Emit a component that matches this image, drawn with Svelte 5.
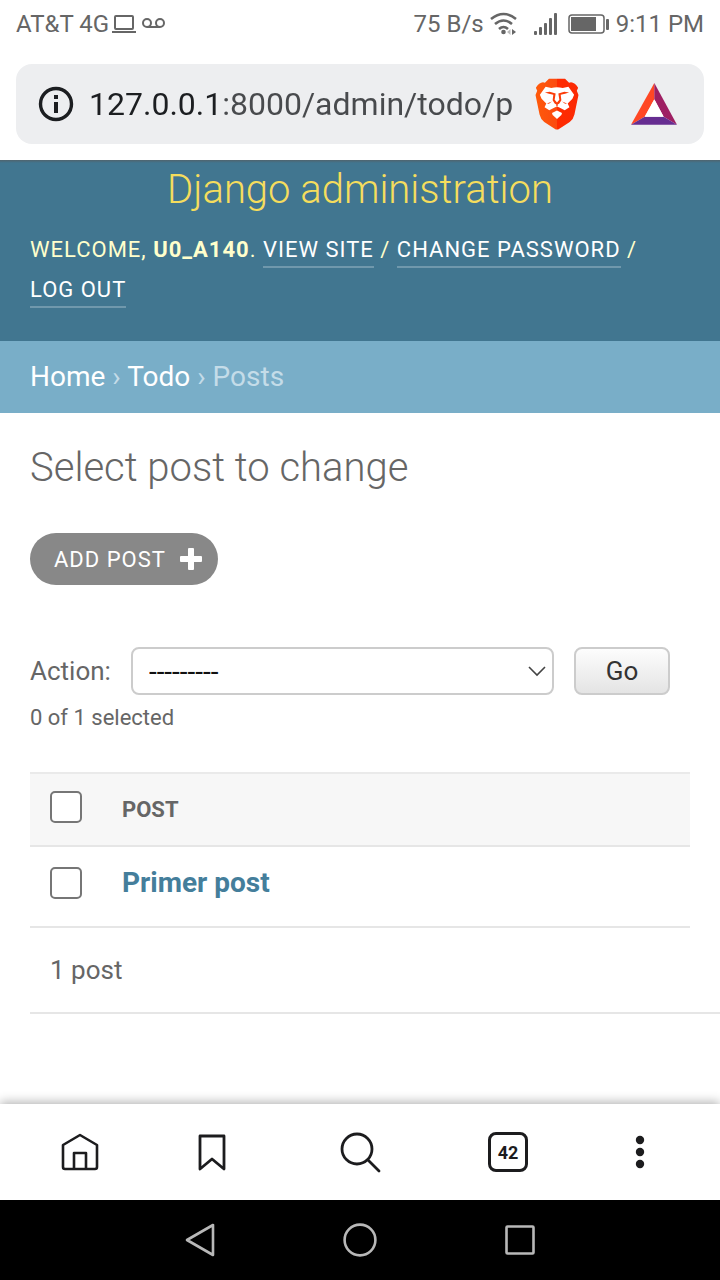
<script>
  let address = '127.0.0.1:8000/admin/todo/p';
  let action = '';
  let openTabs = 42;

  let posts = [{ id: 1, title: 'Primer post', selected: false }];

  $: selectedCount = posts.filter((post) => post.selected).length;
  $: allSelected = selectedCount === posts.length;

  function toggleAll(event) {
    const checked = event.target.checked;
    posts = posts.map((post) => ({ ...post, selected: checked }));
  }
</script>

<div class="screen">
  <div class="status-bar">
    <div class="status-group">
      <span>AT&amp;T 4G</span>
      <svg class="laptop" width="24" height="20" viewBox="0 0 24 20" fill="none" stroke="#666" stroke-width="2">
        <rect x="3" y="2" width="18" height="13" rx="1" />
        <path d="M0 18h24" />
      </svg>
      <svg class="voicemail" width="24" height="12" viewBox="0 0 24 12" fill="none" stroke="#666" stroke-width="2">
        <circle cx="5" cy="5" r="4" />
        <circle cx="18" cy="5" r="4" />
        <path d="M5 9h13" />
      </svg>
    </div>
    <div class="status-group">
      <span>75 B/s</span>
      <svg class="wifi" width="28" height="24" viewBox="0 0 28 24" fill="none" stroke="#666" stroke-width="2.6">
        <path d="M1 7Q13.500 -3 26 7" />
        <path d="M5 12Q13.500 5 22 12" />
        <path d="M9 17Q13.500 13 18 17" />
        <circle cx="13.500" cy="20" r="2.300" fill="#666" stroke="none" />
        <path d="M22 17l4 3-4 3z" fill="#666" stroke="none" />
        <path d="M20.500 17l-3.500 3 3.500 3z" fill="#bbb" stroke="none" />
      </svg>
      <svg class="signal" width="24" height="22" viewBox="0 0 24 22" fill="#666">
        <rect x="0" y="18" width="3" height="4" rx="1" />
        <rect x="5" y="14" width="3" height="8" rx="1" />
        <rect x="10" y="10" width="3" height="12" rx="1" />
        <rect x="15" y="5" width="3" height="17" rx="1" />
        <rect x="20" y="0" width="3" height="22" rx="1" />
      </svg>
      <svg class="battery" width="42" height="20" viewBox="0 0 42 20">
        <rect x="1" y="1" width="35" height="18" rx="3" fill="none" stroke="#666" stroke-width="1.500" />
        <rect x="3" y="3" width="25" height="14" fill="#666" />
        <rect x="38" y="5" width="3" height="11" rx="1" fill="#666" />
      </svg>
      <span>9:11 PM</span>
    </div>
  </div>

  <div class="address-bar">
    <svg class="info" width="36" height="36" viewBox="0 0 36 36">
      <circle cx="18" cy="18" r="15.500" fill="none" stroke="#1c1e21" stroke-width="3.400" />
      <rect x="16" y="9" width="4" height="4" fill="#1c1e21" />
      <rect x="16" y="16" width="4" height="11" fill="#1c1e21" />
    </svg>
    <input class="address" type="text" aria-label="Address" bind:value={address} spellcheck="false" />
    <button class="logo-button" aria-label="Brave Shields">
      <svg width="44" height="52" viewBox="49 41 130 155">
        <defs>
          <linearGradient id="lion" x1="0" x2="1">
            <stop offset="0" stop-color="#ff5a0a" />
            <stop offset="0.500" stop-color="#fb4a10" />
            <stop offset="0.510" stop-color="#ff2b00" />
            <stop offset="1" stop-color="#fb2a05" />
          </linearGradient>
        </defs>
        <path fill="url(#lion)" d="M90 43H138L150 55C158 50 170 57 177 70L173 79L178 92L166 150Q163 164 152 172L121 192Q114 197 107 192L76 172Q65 164 62 150L50 92L55 79L51 70C58 57 70 50 78 55Z" />
        <path fill="#fff" d="M80 67L97 71Q114 66 131 71L148 67L165 91L160 103L146 117L151 128L137 137L121 129Q114 125 107 129L91 137L77 128L82 117L68 103L63 91Z" />
        <path fill="#fff" d="M99 145L114 138L129 145L127 151L114 163L101 151Z" />
        <path fill="#fb3c08" d="M78 84L92 82L110 87L107 106L114 114L121 106L118 87L136 82L150 84L138 88L125 91L127 107L121 117L116 120V126H112V120L107 117L101 107L103 91L90 88Z" />
        <path fill="#fb3c08" d="M84 117L99 111L90 118ZM144 117L129 111L138 118Z" />
      </svg>
    </button>
    <button class="logo-button rewards" aria-label="Brave Rewards">
      <svg width="46" height="42" viewBox="333 55 138 126">
        <path fill="#ff4724" d="M403 55V104L374 156L333 180Z" />
        <path fill="#9e1f63" d="M403 55L471 180L431 156L403 104Z" />
        <path fill="#662d91" d="M333 180L374 156H431L471 180Z" />
        <path fill="#fff" d="M403 104L431 156H374Z" />
      </svg>
    </button>
  </div>

  <header class="site-header">
    <h1>Django administration</h1>
    <div class="user-tools">
      <span>Welcome,</span>
      <span><strong>u0_a140</strong>.</span>
      <a href="#site">View site</a>
      <span>/</span>
      <a href="#password">Change password</a>
      <span>/</span>
      <a href="#logout">Log out</a>
    </div>
  </header>

  <nav class="breadcrumbs" aria-label="Breadcrumbs">
    <a href="#home">Home</a>
    <span>›</span>
    <a href="#todo">Todo</a>
    <span>›</span>
    <span>Posts</span>
  </nav>

  <main>
    <h2>Select post to change</h2>

    <a class="add-link" href="#add">
      <span>Add post</span>
      <svg width="22" height="22" viewBox="0 0 22 22" fill="#fff">
        <rect x="8" y="0" width="6" height="22" rx="1" />
        <rect x="0" y="8" width="22" height="6" rx="1" />
      </svg>
    </a>

    <div class="actions">
      <label for="action">Action:</label>
      <div class="select-wrapper">
        <select id="action" bind:value={action}>
          <option value="">---------</option>
          <option value="delete">Delete selected posts</option>
        </select>
        <svg width="18" height="11" viewBox="0 0 18 11" fill="none" stroke="#444" stroke-width="1.600">
          <path d="M1 1l8 8 8-8" />
        </svg>
      </div>
      <button class="go" type="button">Go</button>
    </div>
    <p class="counter">{selectedCount} of {posts.length} selected</p>

    <table>
      <thead>
        <tr>
          <th class="check">
            <input type="checkbox" aria-label="Select all posts" checked={allSelected} on:change={toggleAll} />
          </th>
          <th>Post</th>
        </tr>
      </thead>
      <tbody>
        {#each posts as post (post.id)}
          <tr>
            <td class="check">
              <input type="checkbox" aria-label="Select {post.title}" bind:checked={post.selected} />
            </td>
            <td><a href="#post-{post.id}">{post.title}</a></td>
          </tr>
        {/each}
      </tbody>
    </table>

    <p class="paginator">{posts.length} post</p>
  </main>

  <nav class="toolbar" aria-label="Browser">
    <button aria-label="Home">
      <svg width="40" height="40" viewBox="0 0 40 40" fill="none" stroke="#1c1c1e" stroke-width="2.600" stroke-linejoin="round">
        <path d="M20 3L37 13V35Q37 37 35 37H5Q3 37 3 35V13Z" />
        <path d="M14 37V21H26V37" />
      </svg>
    </button>
    <button aria-label="Bookmarks">
      <svg width="40" height="40" viewBox="0 0 40 40" fill="none" stroke="#1c1c1e" stroke-width="2.800" stroke-linejoin="round">
        <path d="M8 4H32V37L20 27L8 37Z" />
      </svg>
    </button>
    <button class="search" aria-label="Search">
      <svg width="42" height="42" viewBox="0 0 42 42" fill="none" stroke="#1c1c1e" stroke-width="2.800" stroke-linecap="round">
        <circle cx="18" cy="18" r="15" />
        <path d="M29 29L40 40" />
      </svg>
    </button>
    <button class="tabs" aria-label="Open tabs">{openTabs}</button>
    <button aria-label="Menu">
      <svg width="40" height="40" viewBox="0 0 40 40" fill="#1c1c1e">
        <circle cx="20" cy="8" r="4.200" />
        <circle cx="20" cy="20" r="4.200" />
        <circle cx="20" cy="32" r="4.200" />
      </svg>
    </button>
  </nav>

  <nav class="system-nav" aria-label="System">
    <button aria-label="Back">
      <svg width="36" height="36" viewBox="0 0 36 36" fill="none" stroke="#b8b8b8" stroke-width="2.600" stroke-linejoin="round">
        <path d="M31 3V33L5 18Z" />
      </svg>
    </button>
    <button aria-label="Home screen">
      <svg width="36" height="36" viewBox="0 0 36 36" fill="none" stroke="#b8b8b8" stroke-width="2.600">
        <circle cx="18" cy="18" r="15.400" />
      </svg>
    </button>
    <button aria-label="Recent apps">
      <svg width="36" height="36" viewBox="0 0 36 36" fill="none" stroke="#b8b8b8" stroke-width="2.600">
        <rect x="4.500" y="4.500" width="27" height="27" rx="1" />
      </svg>
    </button>
  </nav>
</div>

<style>
  :global(body) {
    margin: 0;
    background: #fff;
  }

  .screen {
    display: flex;
    flex-direction: column;
    min-height: 100vh;
    font-family: Roboto, "Liberation Sans", sans-serif;
    color: #666;
    background: #fff;
  }

  .screen * {
    box-sizing: border-box;
  }

  button {
    display: flex;
    align-items: center;
    justify-content: center;
    padding: 0;
    border: none;
    background: none;
    font-family: inherit;
    cursor: pointer;
  }

  a {
    text-decoration: none;
  }

  svg {
    flex: none;
  }

  /* Phone status bar */
  .status-bar {
    display: flex;
    justify-content: space-between;
    height: 48px;
    padding: 0 16px;
    font-size: 24px;
  }

  .status-group {
    display: flex;
    align-items: center;
    line-height: 50px;
  }

  .laptop {
    margin: 0 6px 0 3px;
  }

  .wifi {
    margin: 0 16px 0 6px;
  }

  .signal {
    margin-right: 10px;
  }

  .battery {
    margin-right: 6px;
  }

  /* Browser address bar */
  .address-bar {
    display: flex;
    align-items: center;
    height: 80px;
    margin: 16px;
    padding: 0 27px 0 22px;
    border-radius: 16px;
    background: #edeef0;
  }

  .address {
    flex: 1;
    min-width: 0;
    height: 48px;
    margin: 0 23px 0 15px;
    padding: 0;
    border: none;
    outline: none;
    font-family: inherit;
    font-size: 32px;
    /* the host is darker than the port and the path */
    color: transparent;
    background: linear-gradient(to right, #1c1e21 133px, #484a4d 133px);
    -webkit-background-clip: text;
    background-clip: text;
    caret-color: #1c1e21;
  }

  .rewards {
    margin-left: 52px;
  }

  /* Django header */
  .site-header {
    padding: 6px 30px 31px;
    background: linear-gradient(#50646e, #417690 3px);
    color: #ffc;
  }

  h1,
  h2 {
    margin: 0;
    font-size: 40px;
    font-weight: 300;
    line-height: 48px;
  }

  h1 {
    margin-bottom: 16px;
    color: #f5dd5d;
    text-align: center;
  }

  .user-tools {
    font-size: 22px;
    line-height: 40px;
    letter-spacing: 1px;
    text-transform: uppercase;
  }

  .user-tools a {
    padding-bottom: 4px;
    border-bottom: 2px solid rgba(255, 255, 255, 0.25);
    color: #fff;
    white-space: nowrap;
  }

  .breadcrumbs {
    padding: 0 30px;
    font-size: 28px;
    line-height: 72px;
    color: #c4dce8;
    background: #79aec8;
  }

  .breadcrumbs a {
    color: #fff;
  }

  /* Change list */
  main {
    flex: 1;
    padding: 31px 30px 60px;
  }

  .add-link {
    display: inline-flex;
    align-items: center;
    gap: 14px;
    height: 52px;
    margin-top: 41px;
    padding: 0 16px 0 24px;
    border-radius: 26px;
    font-size: 22px;
    letter-spacing: 1px;
    text-transform: uppercase;
    color: #fff;
    background: #888;
    vertical-align: top;
  }

  .actions {
    display: flex;
    align-items: center;
    gap: 20px;
    margin: 62px 20px 0 0;
    font-size: 26px;
  }

  .select-wrapper {
    display: flex;
    flex: 1;
    align-items: center;
  }

  select {
    flex: 1;
    height: 48px;
    padding: 0 16px;
    border: 2px solid #ccc;
    border-radius: 8px;
    font-family: inherit;
    font-size: 28px;
    color: #111;
    background: #fff;
    appearance: none;
  }

  .select-wrapper svg {
    margin: 0 8px 0 -26px;
    pointer-events: none;
  }

  .go {
    width: 96px;
    height: 48px;
    border: 2px solid #ccc;
    border-radius: 8px;
    font-size: 26px;
    color: #333;
    background: linear-gradient(#fdfdfd, #e4e4e4);
  }

  .counter {
    margin: 7px 0 38px;
    font-size: 22px;
    line-height: 32px;
  }

  table {
    width: 100%;
    border-collapse: separate;
    border-spacing: 0;
    text-align: left;
  }

  th {
    height: 75px;
    padding: 0 20px;
    border-top: 2px solid #eaeaea;
    border-bottom: 2px solid #e6e6e6;
    font-size: 22px;
    background: #f7f7f7;
    text-transform: uppercase;
  }

  th.check {
    padding-bottom: 5px;
  }

  td {
    height: 81px;
    padding: 0 20px 8px;
    border-bottom: 2px solid #e6e6e6;
    font-size: 28px;
    font-weight: 700;
  }

  td a {
    color: #447e9b;
  }

  .check {
    width: 72px;
  }

  input[type='checkbox'] {
    display: block;
    width: 32px;
    height: 32px;
    margin: 0;
    border: 2px solid #767676;
    border-radius: 5px;
    background: #fff;
    appearance: none;
  }

  input[type='checkbox']:checked {
    background: #447e9b;
  }

  /* runs out to the right edge of the page */
  .paginator {
    margin: 0 -30px 0 0;
    padding: 0 20px;
    border-bottom: 2px solid #e6e6e6;
    font-size: 26px;
    line-height: 84px;
  }

  /* Browser toolbar */
  .toolbar {
    display: flex;
    align-items: center;
    justify-content: space-between;
    height: 96px;
    padding: 0 60px;
    background: #fff;
    box-shadow: 0 -2px 10px rgba(0, 0, 0, 0.3);
  }

  .toolbar button {
    width: 40px;
    height: 40px;
  }

  .toolbar .search {
    width: 72px;
  }

  .toolbar .tabs {
    border: 3px solid #1c1c1e;
    border-radius: 8px;
    font-size: 18px;
    font-weight: 700;
    color: #1c1c1e;
  }

  /* Android navigation buttons */
  .system-nav {
    display: flex;
    align-items: center;
    justify-content: center;
    gap: 124px;
    height: 80px;
    background: #000;
  }
</style>
